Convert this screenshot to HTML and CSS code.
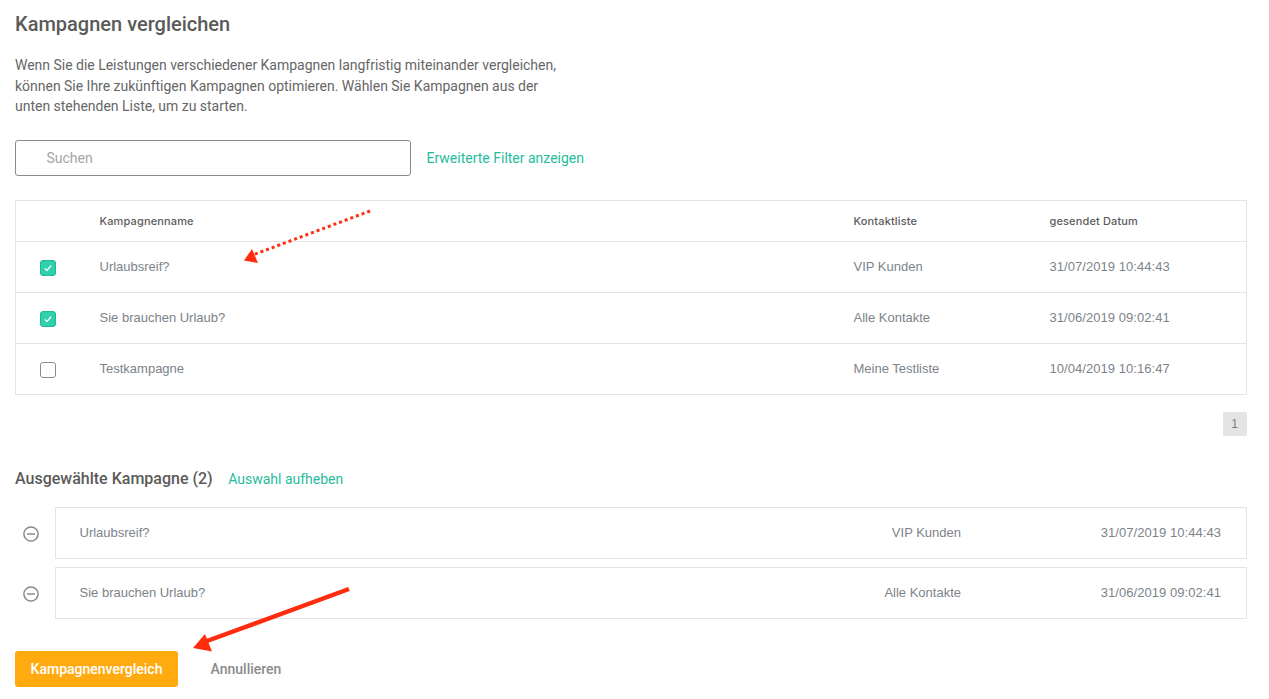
FILE: index.html
```html
<!DOCTYPE html>
<html lang="de">
<head>
<meta charset="utf-8">
<title>Kampagnen vergleichen</title>
<link rel="stylesheet" href="styles.css">
</head>
<body>
<main class="page">
  <h1 class="title">Kampagnen vergleichen</h1>
  <p class="intro">Wenn Sie die Leistungen verschiedener Kampagnen langfristig miteinander vergleichen,<br>können Sie Ihre zukünftigen Kampagnen optimieren. Wählen Sie Kampagnen aus der<br>unten stehenden Liste, um zu starten.</p>
  <div class="search-row">
    <div class="search">Suchen</div>
    <a class="link">Erweiterte Filter anzeigen</a>
  </div>
  <div class="table">
    <div class="row head">
      <span></span><span>Kampagnenname</span><span>Kontaktliste</span><span>gesendet Datum</span>
    </div>
    <div class="row">
      <span class="check on"><svg viewBox="0 0 16 16" width="16" height="16"><path d="M4.8 8.3l2.2 2.2 4.2-5" fill="none" stroke="#fff" stroke-width="1.2"/></svg></span>
      <span>Urlaubsreif?</span><span>VIP Kunden</span><span class="date">31/07/2019 10:44:43</span>
    </div>
    <div class="row">
      <span class="check on"><svg viewBox="0 0 16 16" width="16" height="16"><path d="M4.8 8.3l2.2 2.2 4.2-5" fill="none" stroke="#fff" stroke-width="1.2"/></svg></span>
      <span>Sie brauchen Urlaub?</span><span>Alle Kontakte</span><span class="date">31/06/2019 09:02:41</span>
    </div>
    <div class="row">
      <span class="check"></span>
      <span>Testkampagne</span><span>Meine Testliste</span><span class="date">10/04/2019 10:16:47</span>
    </div>
  </div>
  <div class="pager"><span class="page-num">1</span></div>
  <div class="selected-head">
    <h2 class="subtitle">Ausgewählte Kampagne (2)</h2>
    <a class="link">Auswahl aufheben</a>
  </div>
  <div class="selected">
    <svg class="minus" viewBox="0 0 16 16" width="16" height="16"><circle cx="8" cy="8" r="7.1" fill="none" stroke="#8a8a8a" stroke-width="1.5"/><path d="M4 8h8" stroke="#8a8a8a" stroke-width="1.5"/></svg>
    <div class="card"><span class="card-name">Urlaubsreif?</span><span class="card-list">VIP Kunden</span><span class="card-date date">31/07/2019 10:44:43</span></div>
  </div>
  <div class="selected">
    <svg class="minus" viewBox="0 0 16 16" width="16" height="16"><circle cx="8" cy="8" r="7.1" fill="none" stroke="#8a8a8a" stroke-width="1.5"/><path d="M4 8h8" stroke="#8a8a8a" stroke-width="1.5"/></svg>
    <div class="card"><span class="card-name">Sie brauchen Urlaub?</span><span class="card-list">Alle Kontakte</span><span class="card-date date">31/06/2019 09:02:41</span></div>
  </div>
  <div class="actions">
    <button class="primary">Kampagnenvergleich</button>
    <button class="cancel">Annullieren</button>
  </div>
</main>
<svg class="arrows" width="1269" height="699" viewBox="0 0 1269 699">
  <path d="M370 211L254 254.500" stroke="#ff2c0e" stroke-width="3" stroke-dasharray="3 3" fill="none"/>
  <path d="M244 260.500L252 249L258 263Z" fill="#ff2c0e"/>
  <path d="M349 589L207 641" stroke="#ff2c0e" stroke-width="4.500" fill="none"/>
  <path d="M193 648L205 634L212 651.500Z" fill="#ff2c0e"/>
</svg>
</body>
</html>
```
FILE: styles.css
```css
html, body { margin: 0; padding: 0; background: #fff; }
body { height: 699px; overflow: hidden; font-family: Roboto, sans-serif; color: #5f5f5f; position: relative; }
.page { padding: 0 22px 0 15px; }
.title { margin: 0; padding-top: 12px; font-size: 20px; line-height: 24px; font-weight: 500; color: #5a5a5a; }
.intro { margin: 19px 0 0; font-size: 14px; line-height: 20.500px; letter-spacing: -0.015px; color: #666; }
.search-row { display: flex; align-items: center; gap: 15.500px; margin-top: 23px; }
.search { box-sizing: border-box; width: 396px; height: 36px; border: 1px solid #8b8b8b; border-radius: 3px; padding-left: 30.500px; font-size: 14px; line-height: 34px; color: #a5a5a5; }
.link { font-size: 14px; color: #1fbd9c; }
.table { margin-top: 24px; border: 1px solid #e4e4e4; border-bottom: 0; font-family: "Liberation Sans", sans-serif; font-size: 13px; color: #7c838a; }
.row { display: grid; grid-template-columns: 83.500px 754px 196px 1fr; align-items: center; height: 50px; border-bottom: 1px solid #e4e4e4; }
.row.head { height: 40px; font-family: Inter, sans-serif; font-size: 11px; font-weight: 500; letter-spacing: 0.14px; color: #5c5c5c; }
.date { letter-spacing: 0.05px; }
.check { box-sizing: border-box; width: 16px; height: 16px; margin-left: 24px; margin-top: 2px; border: 1px solid #8a8a8a; border-radius: 3px; display: block; }
.check.on { background: #2fd0ab; border-color: #20b795; }
.check svg { display: block; margin: -1px; }
.pager { display: flex; justify-content: flex-end; margin-top: 17px; }
.page-num { width: 24px; height: 24px; box-sizing: border-box; padding-right: 1px; border-radius: 2px; background: #e4e4e4; font-family: "Liberation Sans", sans-serif; font-size: 12px; line-height: 24px; text-align: center; color: #7c7c7c; }
.selected-head { display: flex; align-items: center; gap: 15.500px; margin-top: 31px; height: 24px; }
.subtitle { margin: 0; font-size: 16px; font-weight: 500; color: #5a5a5a; }
.selected { display: flex; align-items: center; gap: 16px; margin-top: 8px; font-family: "Liberation Sans", sans-serif; font-size: 13px; color: #7c838a; }
.selected-head + .selected { margin-top: 16px; }
.minus { flex: none; margin-top: 2px; margin-left: 8px; }
.card { box-sizing: border-box; flex: 1; height: 52px; border: 1px solid #e4e4e4; display: flex; align-items: center; padding: 0 25px 0 23.500px; }
.card-date { width: 260px; text-align: right; }
.card-name { flex: 1; }
.actions { display: flex; align-items: center; gap: 17px; margin-top: 32px; }
.primary { width: 163px; height: 36px; border: 0; border-radius: 3px; background: #ffab10; color: #fff; font-family: Roboto, sans-serif; font-size: 14px; font-weight: 500; padding: 0; }
.cancel { width: 102px; height: 36px; border: 0; background: none; color: #8a8a8a; font-family: Roboto, sans-serif; font-size: 14px; font-weight: 500; padding: 0; }
.arrows { position: absolute; left: 0; top: 0; pointer-events: none; }
```
